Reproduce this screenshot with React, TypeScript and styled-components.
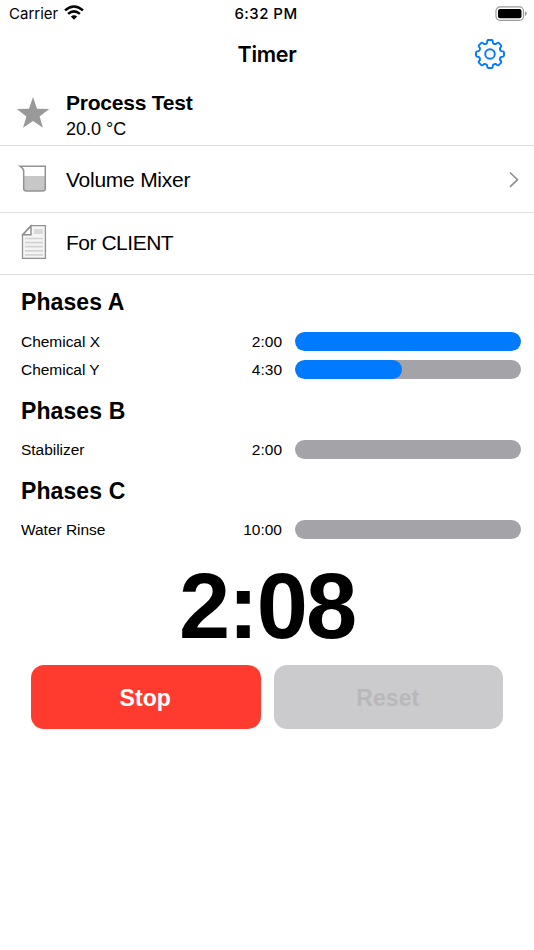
import React from "react";
import styled, { createGlobalStyle } from "styled-components";

const GlobalStyle = createGlobalStyle`
  * { box-sizing: border-box; }
  body { margin: 0; background: #fff; color: #000; font-family: "Liberation Sans", Arial, sans-serif; }
`;

const Screen = styled.main`
  width: 534px;
  height: 950px;
  overflow: hidden;
  background: #fff;
  display: flex;
  flex-direction: column;
`;

const StatusBar = styled.div`
  height: 28px;
  flex: none;
  display: grid;
  grid-template-columns: 1fr auto 1fr;
  align-items: center;
  padding: 0 7px 0 9px;
  font-family: Inter, sans-serif;
  font-size: 15px;
  line-height: 28px;
`;

const Carrier = styled.div`
  display: flex;
  align-items: center;
  gap: 6px;
  svg { margin-bottom: 3px; }
`;

const Clock = styled.div`
  font-weight: 500;
  letter-spacing: 0.45px;
  margin: 0 2px 0 -2px;
`;

const BatteryIcon = styled.svg`
  justify-self: end;
  display: block;
`;

const NavBar = styled.header`
  height: 56px;
  flex: none;
  display: grid;
  grid-template-columns: 1fr auto 1fr;
  align-items: center;
  padding: 0 28px;
`;

const Title = styled.h1`
  grid-column: 2;
  margin: 0;
  padding-bottom: 4px;
  font: 600 21.5px/28px Inter, sans-serif;
  letter-spacing: -0.3px;
`;

const SettingsButton = styled.button`
  justify-self: end;
  border: 0;
  padding: 0;
  width: 32px;
  height: 32px;
  margin-bottom: 4px;
  background: none;
  svg { display: block; }
`;

const ListRow = styled.div<{ $height: number; $top?: number }>`
  height: ${(p) => p.$height}px;
  flex: none;
  padding: ${(p) => p.$top ?? 0}px 14px 0 16px;
  border-bottom: 1px solid #dfdfe3;
  display: flex;
  align-items: center;
`;

const RowIcon = styled.div<{ $lift: number }>`
  width: 34px;
  height: 40px;
  margin: 0 16px ${(p) => p.$lift * 2}px 0;
  flex: none;
  svg { display: block; }
`;

const RowText = styled.div<{ $spacing: number; $lift?: number }>`
  flex: 1;
  font-size: 21px;
  line-height: 26px;
  padding-bottom: ${(p) => (p.$lift ?? 0) * 2}px;
  letter-spacing: ${(p) => p.$spacing}px;
`;

const ProcessName = styled.div`
  font-weight: 700;
  font-size: 21px;
  line-height: 27px;
  letter-spacing: -0.22px;
`;

const Temperature = styled.div`
  font-size: 18px;
  line-height: 26px;
`;

const Phases = styled.section`
  flex: none;
  padding: 8px 13px 0 21px;
`;

const PhaseGroup = styled.div`
  padding-bottom: 3px;
`;

const PhaseTitle = styled.h2`
  margin: 0 0 10.5px;
  font-size: 23px;
  line-height: 39px;
  height: 38px;
  letter-spacing: 0.1px;
`;

const StepRow = styled.div`
  display: grid;
  grid-template-columns: 1fr 70px 226px;
  column-gap: 13px;
  align-items: center;
  height: 19px;
  margin-bottom: 9.5px;
  font-size: 15.5px;
  line-height: 19px;
`;

const StepName = styled.span`
  letter-spacing: -0.03px;
  white-space: nowrap;
`;

const Duration = styled.span`
  text-align: right;
`;

const Track = styled.div`
  height: 19px;
  border-radius: 10px;
  background: #a3a3a8;
  overflow: hidden;
`;

const Fill = styled.div`
  height: 100%;
  border-radius: inherit;
  background: #007aff;
`;

const Countdown = styled.div`
  height: 104px;
  flex: none;
  margin-top: 2px;
  text-align: center;
  font-weight: 700;
  font-size: 92px;
  line-height: 104px;
  letter-spacing: -2px;
`;

const Actions = styled.div`
  display: grid;
  grid-template-columns: 1fr 1fr;
  gap: 13px;
  padding: 0 31px;
  margin-top: 7px;
`;

const ActionButton = styled.button<{ $kind: "stop" | "reset" }>`
  height: 64px;
  border: 0;
  border-radius: 13px;
  background: ${(p) => (p.$kind === "stop" ? "#ff3b30" : "#cbcbcd")};
  color: ${(p) => (p.$kind === "stop" ? "#fff" : "#b8b8ba")};
  font: 700 23px/28px "Liberation Sans", Arial, sans-serif;
  letter-spacing: 0.1px;
  padding: 2px 1px 0 0;
`;

const gearPath = (() => {
  const at = (r: number, deg: number) => {
    const a = (deg * Math.PI) / 180;
    return `${(16 + r * Math.sin(a)).toFixed(2)} ${(16 - r * Math.cos(a)).toFixed(2)}`;
  };
  let d = "";
  for (let i = 0; i < 8; i++) {
    const t = i * 45;
    d += `${i ? "L" : "M"}${at(11.7, t - 14)} Q${at(14.1, t - 12)} ${at(14.1, t - 7)} L${at(14.1, t + 7)} Q${at(14.1, t + 12)} ${at(11.7, t + 14)} Q${at(10.3, t + 22.5)} ${at(11.7, t + 31)} `;
  }
  return d + "Z";
})();

const WifiIcon = () => (
  <svg width="20" height="15" viewBox="0 0 20 15">
    <g fill="none" stroke="#000" strokeWidth="2.5">
      <path d="M1 5.4Q10-2.4 19 5.4" />
      <path d="M4.1 8.9Q10 3.8 15.9 8.9" />
    </g>
    <path d="M6.8 11.5Q10 8.8 13.2 11.5L10 14.8Z" />
  </svg>
);

const groups = [
  {
    title: "Phases A",
    steps: [
      { name: "Chemical X", time: "2:00", progress: 100 },
      { name: "Chemical Y", time: "4:30", progress: 47.5 },
    ],
  },
  { title: "Phases B", steps: [{ name: "Stabilizer", time: "2:00", progress: 0 }] },
  { title: "Phases C", steps: [{ name: "Water Rinse", time: "10:00", progress: 0 }] },
];

export default function App() {
  return (
    <>
      <GlobalStyle />
      <Screen>
        <StatusBar>
          <Carrier>
            Carrier
            <WifiIcon />
          </Carrier>
          <Clock>6:32 PM</Clock>
          <BatteryIcon width="32" height="16" viewBox="0 0 32 16">
            <rect x="1" y="0.9" width="27.5" height="13.4" rx="4" fill="none" stroke="#999" strokeWidth="1.2" />
            <rect x="3" y="2.9" width="23.5" height="9.4" rx="2" />
            <path d="M30 5.3Q31.8 5.9 31.8 7.6T30 9.9Z" fill="#999" />
          </BatteryIcon>
        </StatusBar>
        <NavBar>
          <Title>Timer</Title>
          <SettingsButton aria-label="Settings">
            <svg width="32" height="32" viewBox="0 0 32 32" fill="none" stroke="#007aff" strokeWidth="1.9" strokeLinejoin="round">
              <path d={gearPath} />
              <circle cx="16" cy="16" r="4.8" />
            </svg>
          </SettingsButton>
        </NavBar>
        <ListRow $height={62} $top={2}>
          <RowIcon $lift={2.5}>
            <svg width="34" height="40" viewBox="0 0 34 40">
              <path d="M17 4L21 15.8L33.2 16.1L23.6 23.6L27 34.8L17 28L7 34.8L10.4 23.6L.8 16.1L13 15.8Z" fill="#999" />
            </svg>
          </RowIcon>
          <div>
            <ProcessName>Process Test</ProcessName>
            <Temperature>20.0 °C</Temperature>
          </div>
        </ListRow>
        <ListRow $height={67} $top={2}>
          <RowIcon $lift={1}>
            <svg width="34" height="40" viewBox="0 0 34 40">
              <path d="M8 17H29V30Q29 32 26.5 32H10.5Q8 32 8 30Z" fill="#c7c7c7" />
              <path d="M4 7.2H29.3V29.5Q29.3 32 26.5 32H10.5Q7.7 32 7.7 29.5V12Q7.7 9.8 4 7.2Z" fill="none" stroke="#929292" strokeWidth="1.5" />
            </svg>
          </RowIcon>
          <RowText $spacing={-0.25}>Volume Mixer</RowText>
          <svg width="12" height="18" viewBox="0 0 12 18" fill="none" stroke="#8e8e93" strokeWidth="1.6">
            <path d="M2 1.5L9.5 8.7L2 15.9" />
          </svg>
        </ListRow>
        <ListRow $height={62}>
          <RowIcon $lift={2}>
            <svg width="34" height="40" viewBox="0 0 34 40">
              <path d="M15 3.7H29.4V36.3H6.5V12.7Z" fill="#f4f4f4" stroke="#929292" strokeWidth="1.3" />
              <path d="M15 4V12.7H6.8Z" fill="#fff" stroke="#8c8c8c" strokeWidth="1.4" />
              <path d="M18 9.5H27" stroke="#dadada" strokeWidth="5" />
              <path d="M9 16.5H27M9 20.6H27M9 24.7H27M9 28.8H27M9 32.9H27" stroke="#d3d3d3" strokeWidth="1.7" />
            </svg>
          </RowIcon>
          <RowText $spacing={-0.48} $lift={1}>For CLIENT</RowText>
        </ListRow>
        <Phases>
          {groups.map((group) => (
            <PhaseGroup key={group.title}>
              <PhaseTitle>{group.title}</PhaseTitle>
              {group.steps.map((step) => (
                <StepRow key={step.name}>
                  <StepName>{step.name}</StepName>
                  <Duration>{step.time}</Duration>
                  <Track>
                    <Fill style={{ width: `${step.progress}%` }} />
                  </Track>
                </StepRow>
              ))}
            </PhaseGroup>
          ))}
        </Phases>
        <Countdown>2:08</Countdown>
        <Actions>
          <ActionButton $kind="stop">Stop</ActionButton>
          <ActionButton $kind="reset" disabled>Reset</ActionButton>
        </Actions>
      </Screen>
    </>
  );
}
